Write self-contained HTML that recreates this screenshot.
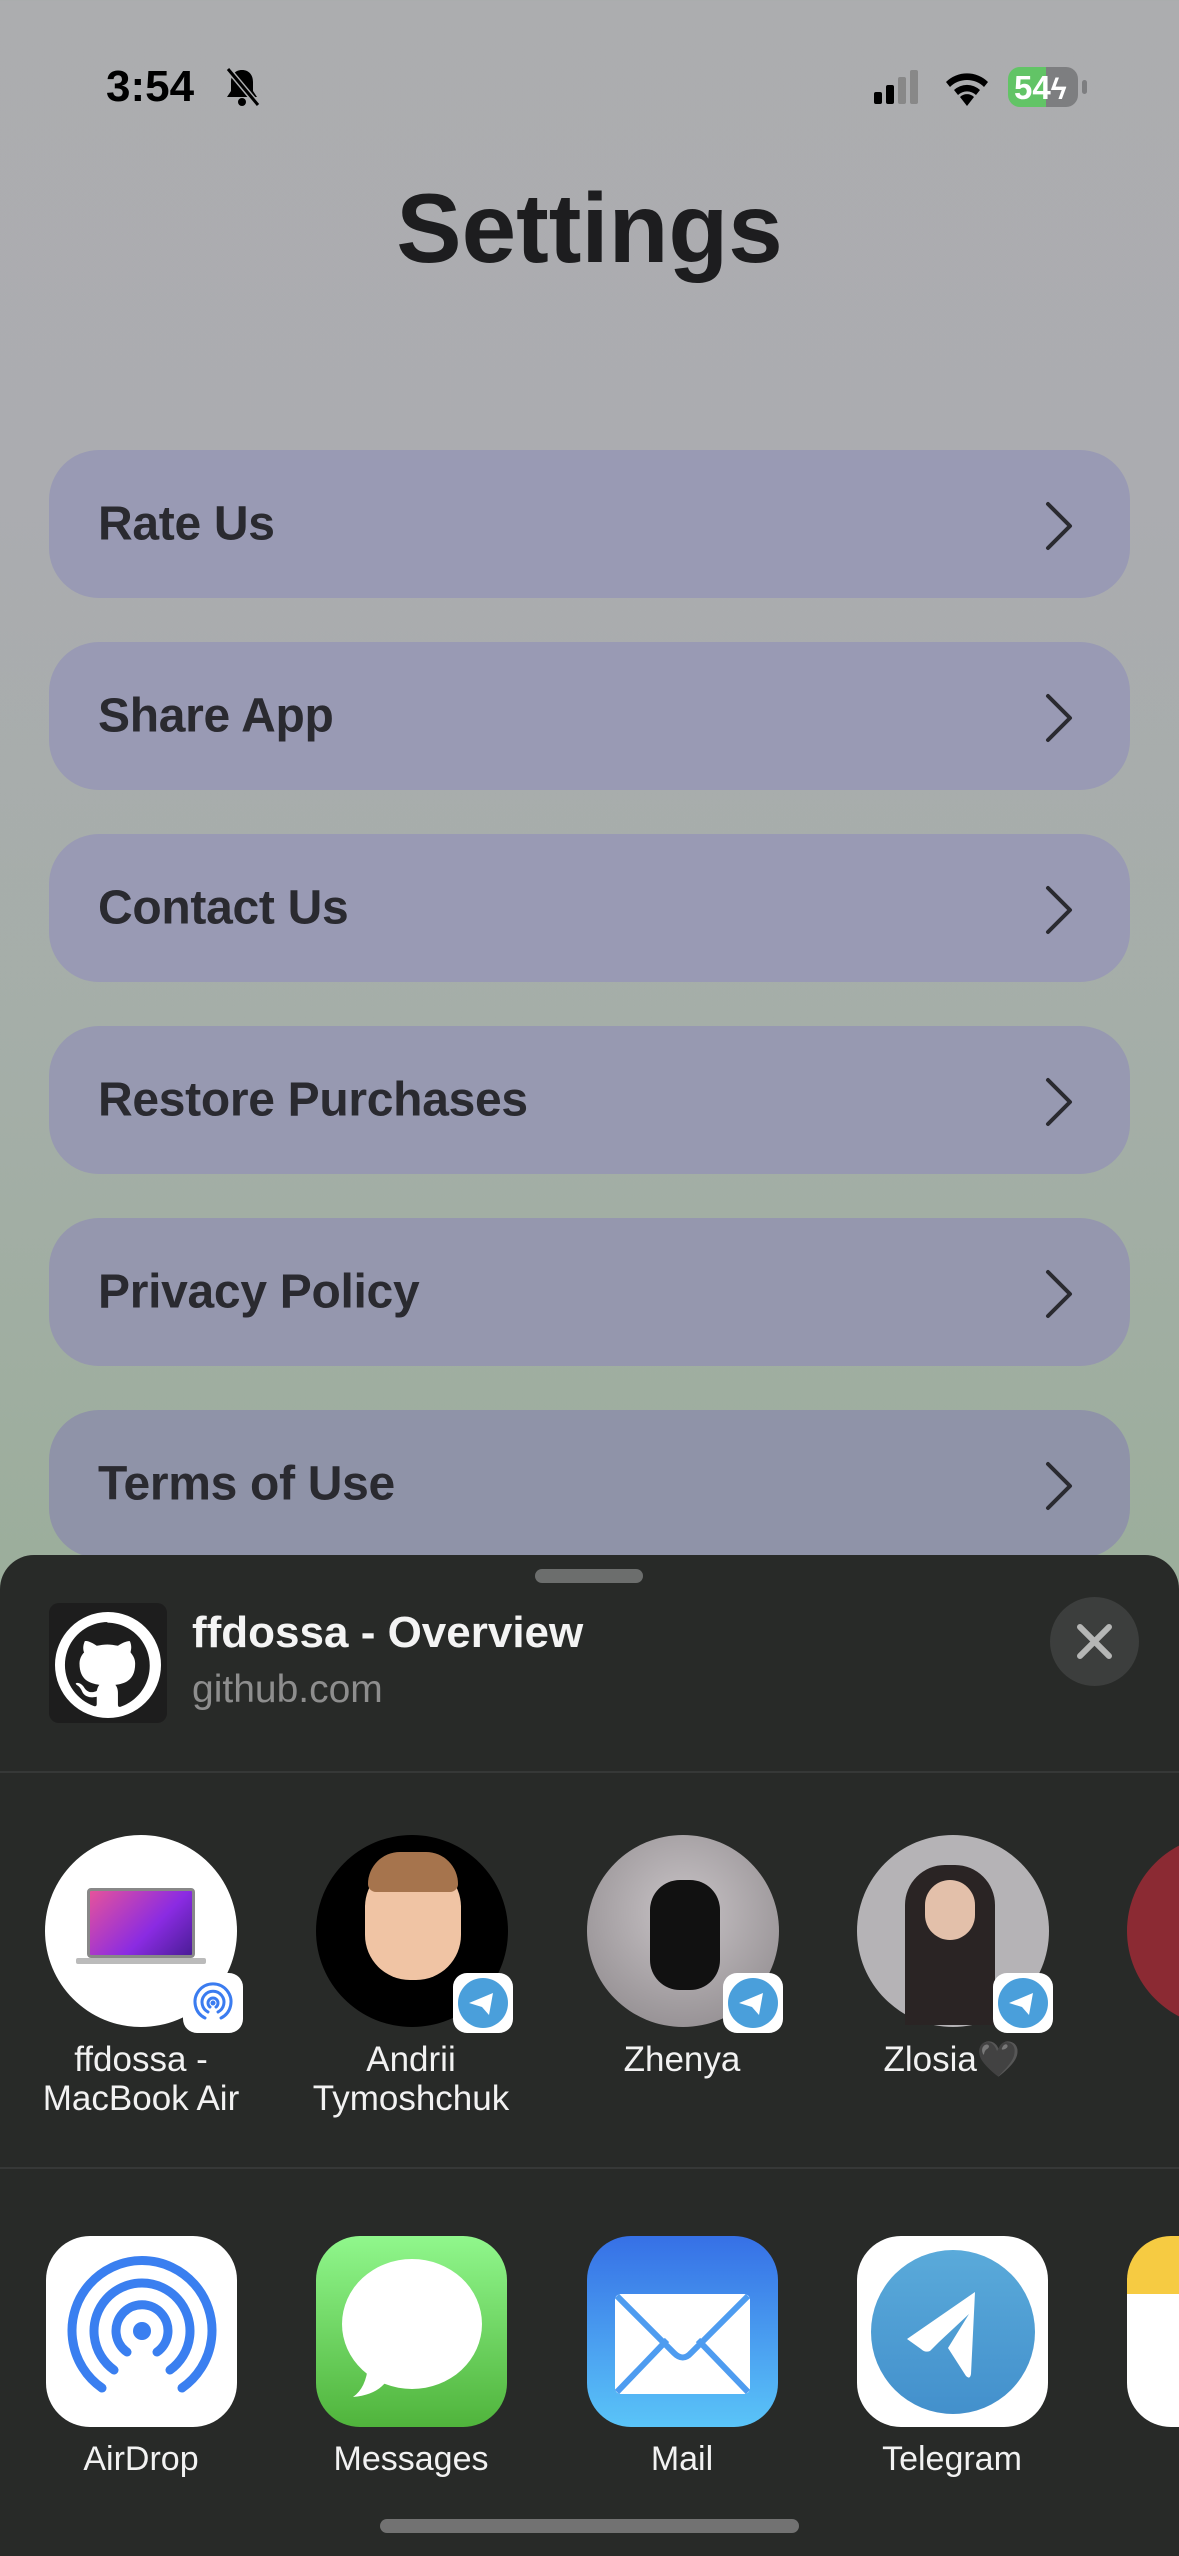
<!DOCTYPE html>
<html><head><meta charset="utf-8"><style>
*{margin:0;padding:0;box-sizing:border-box}
body{width:1179px;height:2556px;overflow:hidden;position:relative;font-family:"Liberation Sans",sans-serif;background:linear-gradient(180deg,#acadaf 0px,#abacb0 500px,#a4aea7 1100px,#9cae9c 1560px)}
.abs{position:absolute}
.row{position:absolute;left:49px;width:1081px;height:148px;border-radius:50px;background:#999ab4}
.row span{position:absolute;left:49px;top:50%;transform:translateY(-50%);font-size:48px;color:#2a2a30;font-weight:700;letter-spacing:-0.3px}
.row svg{position:absolute;right:56px;top:50px}
.sheet{position:absolute;left:0;top:1555px;width:1179px;height:1001px;background:#282a28;border-radius:34px 34px 0 0}
.name{position:absolute;width:260px;text-align:center;color:#f2f2f2;font-size:35px;line-height:39px}
.av{position:absolute;width:192px;height:192px;border-radius:50%;top:1835px}
.badge{position:absolute;width:60px;height:60px;border-radius:14px;background:#fff;top:1973px}
.app{position:absolute;top:2236px;width:191px;height:191px;border-radius:44px;overflow:hidden}
.lab{position:absolute;top:2440px;width:260px;text-align:center;color:#f2f2f2;font-size:34px}
</style></head><body>
<div class="abs" style="left:106px;top:62px;font-size:44px;font-weight:700;color:#000">3:54</div>
<svg class="abs" style="left:222px;top:66px" width="40" height="42" viewBox="0 0 40 42"><path d="M20 4c-7 0-11 5-11 12v9l-4 6h30l-4-6v-9c0-7-4-12-11-12z" fill="#000"/><circle cx="20" cy="36" r="4" fill="#000"/><path d="M6 3l30 36" stroke="#acadaf" stroke-width="6"/><path d="M6 3l30 36" stroke="#000" stroke-width="3"/></svg>
<svg class="abs" style="left:872px;top:68px" width="60" height="38"><rect x="2" y="24" width="8" height="12" rx="2"/><rect x="14" y="17" width="8" height="19" rx="2"/><rect x="26" y="9" width="8" height="27" rx="2" fill="#888"/><rect x="38" y="2" width="8" height="34" rx="2" fill="#888"/></svg>
<svg class="abs" style="left:942px;top:68px" width="50" height="40" viewBox="0 0 50 40"><path d="M25 38l-7-9a10 10 0 0 1 14 0z"/><path d="M12 22a19 19 0 0 1 26 0l-4 5a13 13 0 0 0-18 0z"/><path d="M4 14a30 30 0 0 1 42 0l-4 5a24 24 0 0 0-34 0z"/></svg>
<div class="abs" style="left:1008px;top:67px;width:70px;height:40px;border-radius:12px;background:linear-gradient(90deg,#62c466 0 54%,#7d7e80 54%)"></div>
<div class="abs" style="left:1082px;top:80px;width:5px;height:14px;border-radius:3px;background:#7d7e80"></div>
<div class="abs" style="left:1014px;top:69px;font-size:33px;font-weight:700;color:#fff">54<span style="font-size:30px">ϟ</span></div>
<div class="abs" style="left:0;width:1179px;top:172px;text-align:center;font-size:98px;font-weight:700;color:#1d1d1f">Settings</div>

<div class="row" style="top:450px"><span>Rate Us</span><svg width="30" height="52"><path d="M4 4l22 22-22 22" fill="none" stroke="#2a2a30" stroke-width="4" stroke-linecap="round" stroke-linejoin="round"/></svg></div>
<div class="row" style="top:642px"><span>Share App</span><svg width="30" height="52"><path d="M4 4l22 22-22 22" fill="none" stroke="#2a2a30" stroke-width="4" stroke-linecap="round" stroke-linejoin="round"/></svg></div>
<div class="row" style="top:834px"><span>Contact Us</span><svg width="30" height="52"><path d="M4 4l22 22-22 22" fill="none" stroke="#2a2a30" stroke-width="4" stroke-linecap="round" stroke-linejoin="round"/></svg></div>
<div class="row" style="top:1026px;background:#9799b1"><span>Restore Purchases</span><svg width="30" height="52"><path d="M4 4l22 22-22 22" fill="none" stroke="#2a2a30" stroke-width="4" stroke-linecap="round" stroke-linejoin="round"/></svg></div>
<div class="row" style="top:1218px;background:#9597ae"><span>Privacy Policy</span><svg width="30" height="52"><path d="M4 4l22 22-22 22" fill="none" stroke="#2a2a30" stroke-width="4" stroke-linecap="round" stroke-linejoin="round"/></svg></div>
<div class="row" style="top:1410px;background:#8f93a8"><span>Terms of Use</span><svg width="30" height="52"><path d="M4 4l22 22-22 22" fill="none" stroke="#2a2a30" stroke-width="4" stroke-linecap="round" stroke-linejoin="round"/></svg></div>

<div class="sheet"></div>
<div class="abs" style="left:535px;top:1569px;width:108px;height:14px;border-radius:7px;background:#6c6e6d"></div>
<div class="abs" style="left:49px;top:1603px;width:118px;height:120px;border-radius:10px;background:#1d1d1d"></div>
<svg class="abs" style="left:55px;top:1612px" width="106" height="106" viewBox="0 0 16 16"><circle cx="8" cy="8" r="8" fill="#fff"/><path fill="#1d1d1d" d="M8 1.5C4.4 1.5 1.5 4.4 1.5 8c0 2.9 1.9 5.3 4.4 6.2.3.1.4-.1.4-.3v-1.1c-1.8.4-2.2-.8-2.2-.8-.3-.7-.7-.9-.7-.9-.6-.4 0-.4 0-.4.6 0 1 .7 1 .7.6 1 1.5.7 1.9.5.1-.4.2-.7.4-.9-1.4-.2-3-.7-3-3.2 0-.7.3-1.300.7-1.700-.1-.2-.3-.8.1-1.700 0 0 .5-.2 1.8.7.5-.1 1.1-.2 1.6-.2s1.1.1 1.6.2c1.2-.8 1.8-.7 1.8-.7.4.9.1 1.5.1 1.7.4.5.7 1 .7 1.7 0 2.5-1.5 3-3 3.2.2.2.4.6.4 1.2v1.8c0 .2.1.4.4.3 2.6-.9 4.4-3.3 4.4-6.2 0-3.6-2.9-6.5-6.5-6.5z"/></svg>
<div class="abs" style="left:192px;top:1608px;font-size:44px;font-weight:700;color:#f4f4f4">ffdossa - Overview</div>
<div class="abs" style="left:192px;top:1668px;font-size:39px;color:#8e8e8e">github.com</div>
<div class="abs" style="left:1050px;top:1597px;width:89px;height:89px;border-radius:50%;background:#3c3e3d"></div>
<svg class="abs" style="left:1074px;top:1621px" width="41" height="41"><path d="M6 6l29 29M35 6L6 35" stroke="#b5b6b5" stroke-width="6" stroke-linecap="round"/></svg>
<div class="abs" style="left:0;top:1771px;width:1179px;height:2px;background:#363837"></div>

<div class="av" style="left:45px;background:#fff"></div>
<div class="abs" style="left:87px;top:1888px;width:108px;height:70px;background:linear-gradient(135deg,#e5539b,#8a2be2 60%,#4a1d96);border:3px solid #888;border-radius:4px"></div>
<div class="abs" style="left:76px;top:1958px;width:130px;height:6px;background:#bbb;border-radius:2px"></div>
<div class="badge" style="left:183px"><svg width="60" height="60" viewBox="0 0 60 60"><g fill="none" stroke="#3b7cf0" stroke-width="3" stroke-linecap="round"><path d="M22 45A18 18 0 1 1 38 45"/><path d="M25 39A11 11 0 1 1 35 39"/><path d="M27 34A5 5 0 1 1 33 34"/></g><circle cx="30" cy="30" r="2.5" fill="#3b7cf0"/></svg></div>
<div class="av" style="left:316px;background:#000"></div>
<div class="abs" style="left:365px;top:1862px;width:96px;height:118px;border-radius:45px;background:#f0c4a4"></div>
<div class="abs" style="left:368px;top:1852px;width:90px;height:40px;border-radius:40px 40px 10px 10px;background:#a6744d"></div>
<div class="badge" style="left:453px"><svg width="60" height="60"><circle cx="30" cy="30" r="25" fill="#4a9fdb"/><path d="M16 30l24-10-4 22-7-8z" fill="#fff"/></svg></div>
<div class="av" style="left:587px;background:radial-gradient(circle at 50% 40%,#c8c3c6,#8a8588)"></div>
<div class="abs" style="left:650px;top:1880px;width:70px;height:110px;border-radius:30px;background:#111"></div>
<div class="badge" style="left:723px"><svg width="60" height="60"><circle cx="30" cy="30" r="25" fill="#4a9fdb"/><path d="M16 30l24-10-4 22-7-8z" fill="#fff"/></svg></div>
<div class="av" style="left:857px;background:#b5b3b6"></div>
<div class="abs" style="left:905px;top:1865px;width:90px;height:160px;border-radius:40px 40px 0 0;background:#2a2424"></div>
<div class="abs" style="left:925px;top:1880px;width:50px;height:60px;border-radius:25px;background:#e3c0aa"></div>
<div class="badge" style="left:993px"><svg width="60" height="60"><circle cx="30" cy="30" r="25" fill="#4a9fdb"/><path d="M16 30l24-10-4 22-7-8z" fill="#fff"/></svg></div>
<div class="av" style="left:1127px;background:#8b2a33"></div>

<div class="name" style="left:11px;top:2040px">ffdossa -<br>MacBook Air</div>
<div class="name" style="left:281px;top:2040px">Andrii<br>Tymoshchuk</div>
<div class="name" style="left:552px;top:2040px">Zhenya</div>
<div class="name" style="left:822px;top:2040px">Zlosia🖤</div>
<div class="abs" style="left:0;top:2167px;width:1179px;height:2px;background:#363837"></div>

<div class="app" style="left:46px;background:#fff"><svg width="191" height="191" viewBox="0 0 191 191"><g fill="none" stroke="#3a7ff0" stroke-width="9" stroke-linecap="round"><path d="M56 152A70 70 0 1 1 136 152"/><path d="M68 134A48 48 0 1 1 124 134"/><path d="M81 116A26 26 0 1 1 111 116"/></g><circle cx="96" cy="95" r="9" fill="#3a7ff0"/></svg></div>
<div class="app" style="left:316px;background:linear-gradient(#90f78c,#50b43c)"><svg width="191" height="191"><ellipse cx="96" cy="88" rx="70" ry="65" fill="#fff"/><path d="M52 130q-2 22-15 31q25-2 35-18z" fill="#fff"/></svg></div>
<div class="app" style="left:587px;background:linear-gradient(#3670e6,#5ac4f8)"><svg width="191" height="191"><rect x="28" y="58" width="135" height="100" rx="6" fill="#fff"/><path d="M30 60l57 57q9 9 17 0l57-57M30 156l50-52M161 156l-50-52" fill="none" stroke="#4e9cf0" stroke-width="6"/></svg></div>
<div class="app" style="left:857px;background:#fff"><svg width="191" height="191"><defs><linearGradient id="tg" x1="0" y1="0" x2="0" y2="1"><stop offset="0" stop-color="#5aaada"/><stop offset="1" stop-color="#4390cc"/></linearGradient></defs><circle cx="96" cy="96" r="82" fill="url(#tg)"/><path d="M50 103l68-47-4 82q-1 6-5 2l-18-28 21-34-30 28-9 9q-5 2-9-2z" fill="#fff"/></svg></div>
<div class="app" style="left:1127px;background:#fff;border-top:58px solid #f6cb42"></div>

<div class="lab" style="left:11px">AirDrop</div>
<div class="lab" style="left:281px">Messages</div>
<div class="lab" style="left:552px">Mail</div>
<div class="lab" style="left:822px">Telegram</div>
<div class="abs" style="left:380px;top:2519px;width:419px;height:14px;border-radius:7px;background:#727272"></div>
</body></html>
